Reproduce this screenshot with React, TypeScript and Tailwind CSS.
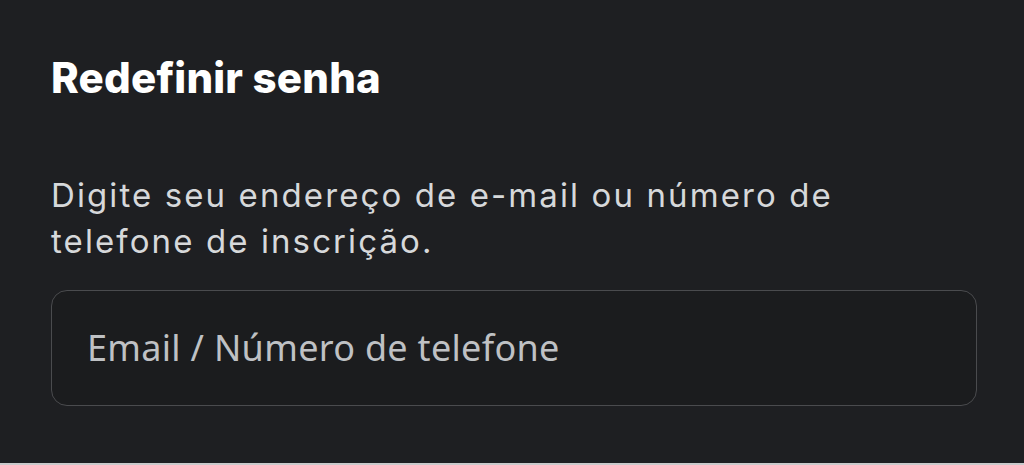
import React from 'react'

function App() {
  return (
    <div className="w-[1024px] h-[465px] bg-[#1e1f22] flex flex-col" style={{ fontFamily: 'Inter, "Noto Sans", sans-serif' }}>
      <div className="flex-1 px-[51px] pt-[53px]">
        <h1 className="text-[42px] leading-[50px] font-extrabold text-white tracking-[0.2px]">Redefinir senha</h1>
        <p className="mt-[69px] text-[33px] leading-[46px] text-[#d6d8da] w-[830px] tracking-[2.1px]">
          Digite seu endereço de e-mail ou número de telefone de inscrição.
        </p>
        <div className="mt-[26px] h-[116px] w-[926px] rounded-[16px] border border-[#4a4b4e] bg-[#1b1c1e] flex items-center px-[35px]">
          <input
            className="w-full bg-transparent outline-none text-[36px] tracking-[0.3px] text-white placeholder:text-[#bfc1c4]"
            style={{ fontFamily: '"Noto Sans", sans-serif' }}
            placeholder="Email / Número de telefone"
          />
        </div>
      </div>
      <div className="h-[2px] bg-[#c9cacc]" />
    </div>
  )
}

export default App
